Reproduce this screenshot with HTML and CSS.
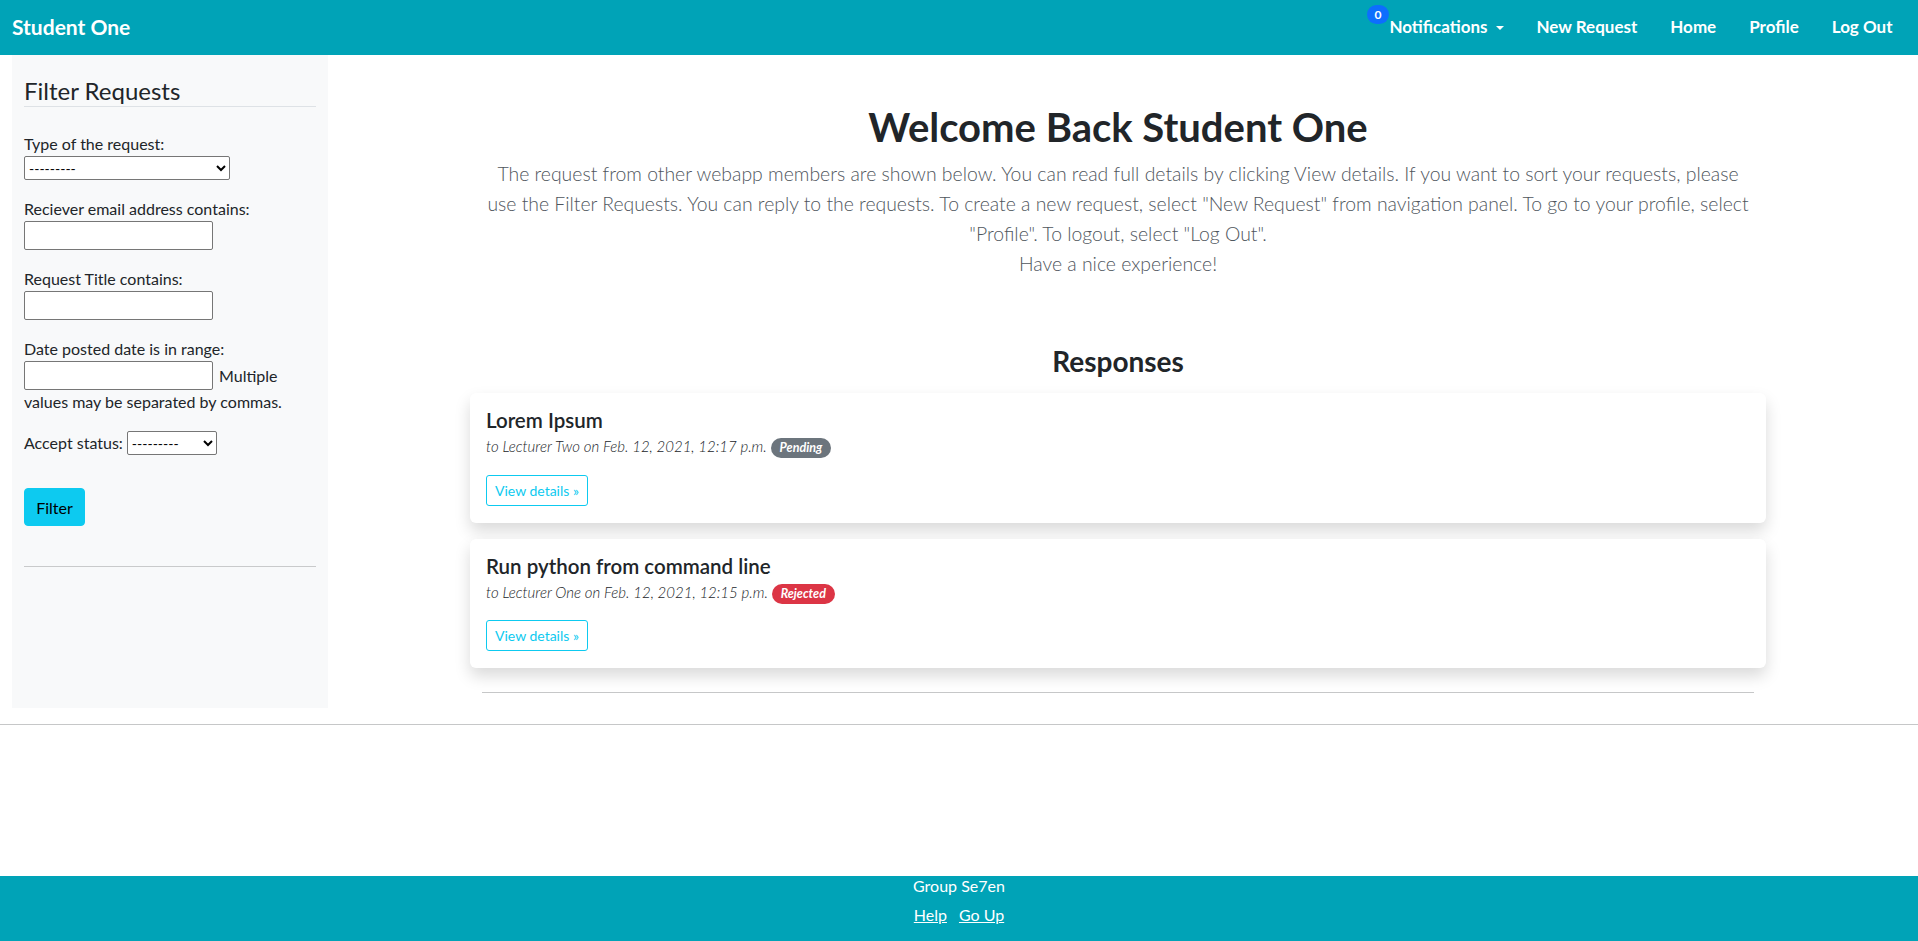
FILE: index.html
```html
<!DOCTYPE html>
<html lang="en">
<head>
<meta charset="utf-8">
<title>Student One</title>
<link rel="stylesheet" href="styles.css">
</head>
<body>
<nav class="navbar">
  <a class="brand" href="#">Student One</a>
  <ul class="nav">
    <li class="nav-item notif">
      <span class="notif-badge">0</span>
      <a class="nav-link" href="#">Notifications<span class="caret"></span></a>
    </li>
    <li class="nav-item"><a class="nav-link" href="#">New Request</a></li>
    <li class="nav-item"><a class="nav-link" href="#">Home</a></li>
    <li class="nav-item"><a class="nav-link" href="#">Profile</a></li>
    <li class="nav-item"><a class="nav-link" href="#">Log Out</a></li>
  </ul>
</nav>

<div class="layout">
  <aside class="sidebar">
    <h4 class="side-title">Filter Requests</h4>
    <form class="filter-form">
      <div class="field">
        <label class="lbl">Type of the request:</label>
        <select class="sel sel-type"><option>---------</option></select>
      </div>
      <div class="field">
        <label class="lbl">Reciever email address contains:</label>
        <input class="txt" type="text">
      </div>
      <div class="field">
        <label class="lbl">Request Title contains:</label>
        <input class="txt" type="text">
      </div>
      <div class="field">
        <label class="lbl">Date posted date is in range:</label>
        <div class="inline-row"><input class="txt" type="text"><span class="help-text">Multiple</span></div>
        <div class="lbl">values may be separated by commas.</div>
      </div>
      <div class="field field-status">
        <label class="lbl-inline">Accept status:</label>
        <select class="sel sel-status"><option>---------</option></select>
      </div>
      <button class="btn-filter" type="button">Filter</button>
    </form>
    <hr class="side-hr">
  </aside>

  <main class="main">
    <div class="container">
      <h1 class="welcome">Welcome Back Student One</h1>
      <p class="lead">The request from other webapp members are shown below. You can read full details by clicking View details. If you want to sort your requests, please<br>use the Filter Requests. You can reply to the requests. To create a new request, select "New Request" from navigation panel. To go to your profile, select<br>"Profile". To logout, select "Log Out".<br>Have a nice experience!</p>

      <h3 class="responses">Responses</h3>

      <div class="card">
        <h5 class="card-title">Lorem Ipsum</h5>
        <h6 class="card-subtitle">to Lecturer Two on Feb. 12, 2021, 12:17 p.m. <span class="badge badge-pending">Pending</span></h6>
        <a class="btn-view" href="#">View details &raquo;</a>
      </div>

      <div class="card">
        <h5 class="card-title">Run python from command line</h5>
        <h6 class="card-subtitle">to Lecturer One on Feb. 12, 2021, 12:15 p.m. <span class="badge badge-rejected">Rejected</span></h6>
        <a class="btn-view" href="#">View details &raquo;</a>
      </div>

      <hr class="main-hr">
    </div>
  </main>
</div>

<hr class="page-hr">

<footer class="footer">
  <div class="footer-line">Group Se7en</div>
  <div class="footer-links"><a href="#">Help</a><a href="#">Go Up</a></div>
</footer>
</body>
</html>
```

FILE: styles.css
```css
* { box-sizing: border-box; }

body {
  margin: 0;
  font-family: Lato, "Liberation Sans", sans-serif;
  font-size: 16px;
  color: #212529;
  background: #fff;
}

/* NAVBAR */
.navbar {
  height: 55px;
  background: #00a3b7;
  display: flex;
  justify-content: space-between;
  align-items: flex-start;
  padding: 15px 9px 0 12px;
}
.brand {
  color: #fff;
  font-weight: 700;
  font-size: 21px;
  line-height: 24px;
  text-decoration: none;
}
.nav {
  list-style: none;
  margin: 0;
  padding: 0;
  display: flex;
}
.nav-item { position: relative; }
.nav-link {
  display: block;
  color: #fff;
  font-weight: 700;
  font-size: 17px;
  line-height: 24px;
  padding: 0 16.5px;
  text-decoration: none;
}
.caret {
  display: inline-block;
  margin-left: 8px;
  vertical-align: 3px;
  border-top: 4px solid #fff;
  border-left: 4px solid transparent;
  border-right: 4px solid transparent;
}
.notif-badge {
  position: absolute;
  top: -10px;
  left: -6px;
  width: 22px;
  height: 19px;
  border-radius: 10px;
  background: #0d6efd;
  color: #fff;
  font-size: 12px;
  font-weight: 700;
  line-height: 19px;
  text-align: center;
}

/* LAYOUT */
.layout {
  display: flex;
  align-items: flex-start;
}

/* SIDEBAR */
.sidebar {
  margin-left: 12px;
  width: 316px;
  height: 653px;
  flex: none;
  background: #f8f9fa;
  padding: 21px 12px 0 12px;
}
.side-title {
  margin: 0;
  font-size: 24px;
  font-weight: 400;
  line-height: 29px;
  padding-bottom: 1px;
  border-bottom: 1px solid #dee2e6;
}
.filter-form { padding-top: 25px; }
.field { margin-bottom: 17px; }
.lbl {
  display: block;
  line-height: 24px;
}
.lbl-inline { line-height: 24px; }
.sel {
  height: 24px;
  border: 1px solid #767676;
  border-radius: 2px;
  background: #fff;
  font-family: inherit;
  font-size: 14px;
  color: #000;
}
.sel-type { display: block; width: 206px; }
.sel-status { width: 90px; }
.txt {
  display: block;
  width: 189px;
  height: 29px;
  border: 1px solid #767676;
  border-radius: 2px;
  background: #fff;
}
.inline-row {
  display: flex;
  align-items: center;
  gap: 6px;
}
.field-status {
  display: flex;
  align-items: center;
  gap: 4px;
  margin-top: 0;
  margin-bottom: 33px;
}
.btn-filter {
  display: block;
  width: 61px;
  height: 38px;
  background: #0dcaf0;
  border: 1px solid #0dcaf0;
  border-radius: 4px;
  font-family: inherit;
  font-size: 16px;
  font-weight: 400;
  color: #000;
  padding: 0;
}
.side-hr {
  margin: 40px 0 0;
  border: 0;
  border-top: 1px solid #c9cacb;
}

/* MAIN */
.main {
  flex: 1;
  padding-right: 10px;
}
.container {
  width: 1296px;
  margin-left: 142px;
}
.welcome {
  margin: 48px 0 8px;
  font-size: 40px;
  font-weight: 700;
  line-height: 48px;
  text-align: center;
}
.lead {
  margin: 0;
  font-size: 19.4px;
  font-weight: 300;
  line-height: 30px;
  color: #4f565d;
  text-align: center;
}
.responses {
  margin: 65px 0 15px;
  font-size: 28px;
  font-weight: 700;
  line-height: 34px;
  text-align: center;
}
.card {
  background: #fff;
  border-radius: 6px;
  box-shadow: 0 8px 16px rgba(0, 0, 0, 0.15);
  padding: 15px 16px 17px;
  margin-bottom: 16px;
}
.card-title {
  margin: 0 0 4px;
  font-size: 20.5px;
  font-weight: 600;
  line-height: 24px;
}
.card-subtitle {
  margin: 0 0 16.5px;
  font-size: 15px;
  font-weight: 300;
  font-style: italic;
  line-height: 20px;
}
.badge {
  display: inline-block;
  padding: 4px 9px;
  font-size: 12.5px;
  font-weight: 700;
  line-height: 12px;
  color: #fff;
  border-radius: 10px;
}
.badge-pending { background: #6c757d; }
.badge-rejected { background: #dc3545; }
.btn-view {
  display: inline-block;
  font-size: 14px;
  line-height: 21px;
  padding: 4px 8px;
  border: 1px solid #0dcaf0;
  border-radius: 3px;
  color: #0dcaf0;
  text-decoration: none;
}
.main-hr {
  margin: 24px 12px 0;
  border: 0;
  border-top: 1px solid #c6c7c8;
}

.page-hr {
  margin: 16px 0 151px;
  border: 0;
  border-top: 1px solid #c6c7c8;
}

/* FOOTER */
.footer {
  height: 65px;
  background: #00a3b7;
  color: #fff;
  text-align: center;
}
.footer-line { line-height: 20px; }
.footer-links {
  margin-top: 9px;
  line-height: 20px;
  display: flex;
  justify-content: center;
  gap: 12px;
}
.footer-links a { color: #fff; }
```
